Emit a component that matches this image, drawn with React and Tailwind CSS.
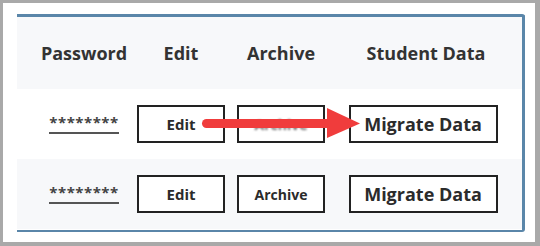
import React from 'react'

const font = { fontFamily: '"Open Sans", "Liberation Sans", sans-serif' }

const Box = ({ children, className = '' }) => (
  <div
    className={`flex items-center justify-center h-[38px] border-2 border-[#222] bg-white font-bold text-[#2b2b2b] ${className}`}
  >
    {children}
  </div>
)

const Row = ({ shaded, faded }) => (
  <div className={`flex items-center h-[70px] ${shaded ? 'bg-[#f7f8fa]' : 'bg-white'}`}>
    <div className="w-[96px] flex justify-center">
      <span className="text-[15px] font-bold leading-[16px] text-[#444] tracking-[0.5px] border-b-2 border-[#555] pb-[2px]">
        ********
      </span>
    </div>
    <div className="w-[98px] flex justify-center">
      <Box className="w-[88px] text-[15px]">Edit</Box>
    </div>
    <div className="w-[102px] flex justify-center">
      <Box className="w-[88px] text-[14px]">
        <span className={faded ? 'blur-[1px] text-[#666]' : ''}>Archive</span>
      </Box>
    </div>
    <div className="w-[182px] flex justify-center">
      <Box className="w-[149px] text-[18px]">Migrate Data</Box>
    </div>
  </div>
)

export default function App() {
  return (
    <div
      className="w-[540px] h-[246px] bg-white border-l-[3px] border-t-[3px] border-r-[5px] border-b-[4px] border-[#a9a9a9] pl-[14px] pt-[11px] pr-[10px] pb-[10px]"
      style={font}
    >
      <div className="relative h-full border-t-[3px] border-r-[3px] border-b-2 border-[#5a86a9] rounded-tr-[3px] rounded-br-[3px] pl-[19px] bg-white">
        <div className="flex items-center h-[72px] -ml-[19px] pl-[19px] bg-[#f7f8fa] text-[18px] font-bold text-[#333]">
          <div className="w-[96px] text-center">Password</div>
          <div className="w-[98px] text-center">Edit</div>
          <div className="w-[102px] text-center">Archive</div>
          <div className="w-[182px] text-center pl-[6px]">Student Data</div>
        </div>
        <Row faded />
        <div className="-ml-[19px] pl-[19px] bg-[#f7f8fa]">
          <Row shaded />
        </div>

        <svg
          className="absolute left-[181px] top-[89px]"
          width="166"
          height="34"
          viewBox="0 0 166 34"
        >
          <line x1="8.5" y1="17.5" x2="134" y2="17.5" stroke="#f03c3c" strokeWidth="9" strokeLinecap="round" />
          <polygon points="129,2 162,17.5 129,32" fill="#f03c3c" />
        </svg>
      </div>
    </div>
  )
}
